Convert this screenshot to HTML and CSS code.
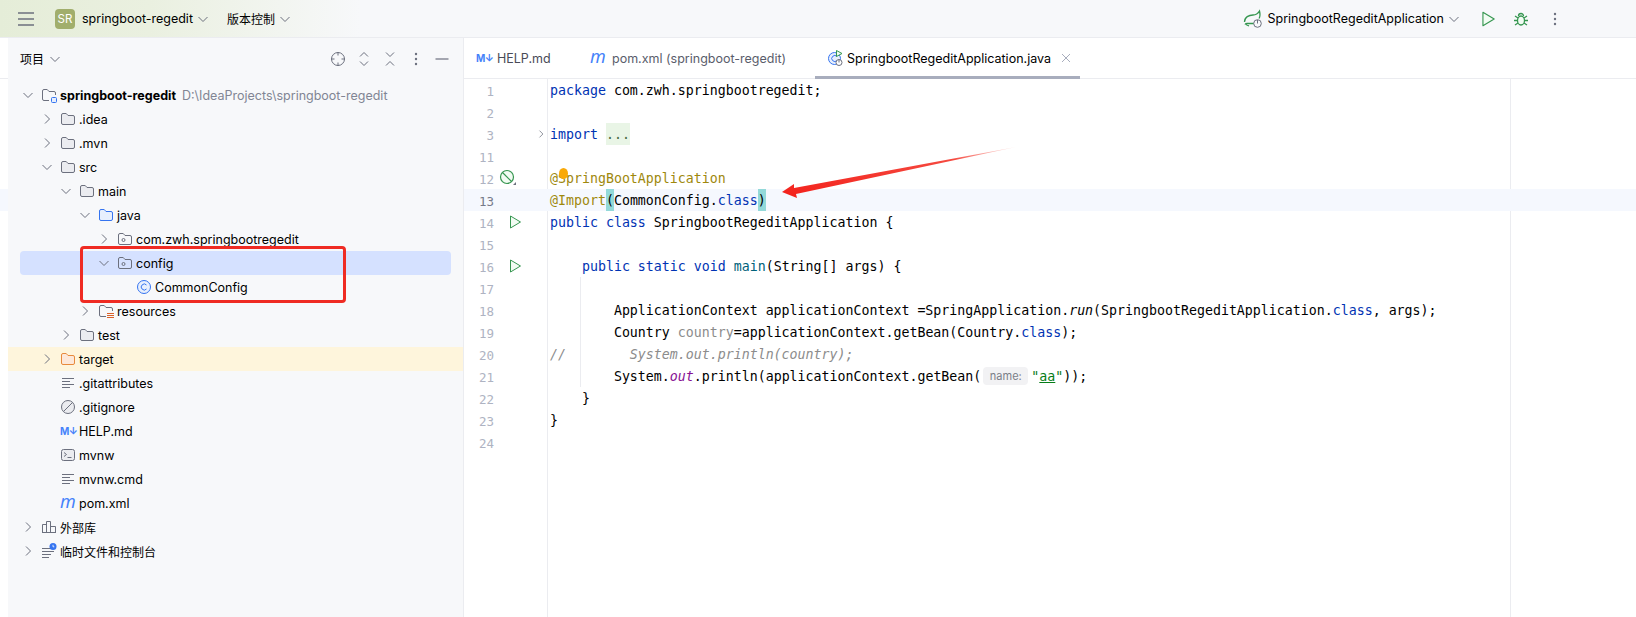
FILE: index.html
```html
<!DOCTYPE html>
<html lang="zh-CN">
<head>
    <meta charset="UTF-8">
    <title>springboot-regedit</title>
    <link rel="stylesheet" href="styles.css">
</head>
<body>
    <svg class="defs" width="0" height="0">
        <symbol id="i-down" viewBox="0 0 16 16"><path d="M3.500 6 8 10.500 12.500 6" fill="none" stroke="#6c707e"/></symbol>
        <symbol id="i-right" viewBox="0 0 16 16"><path d="M6 3.500 10.500 8 6 12.500" fill="none" stroke="#6c707e"/></symbol>
        <symbol id="i-folder" viewBox="0 0 16 16"><path d="M1.500 4A1.500 1.500 0 0 1 3 2.500h3.200l1.800 2h5A1.500 1.500 0 0 1 14.500 6v6a1.500 1.500 0 0 1-1.500 1.500H3A1.500 1.500 0 0 1 1.500 12z" fill="#ebecf0" stroke="#6c707e"/></symbol>
        <symbol id="i-folder-blue" viewBox="0 0 16 16"><path d="M1.500 4A1.500 1.500 0 0 1 3 2.500h3.200l1.800 2h5A1.500 1.500 0 0 1 14.500 6v6a1.500 1.500 0 0 1-1.500 1.500H3A1.500 1.500 0 0 1 1.500 12z" fill="#e7effd" stroke="#3574f0"/></symbol>
        <symbol id="i-folder-orange" viewBox="0 0 16 16"><path d="M1.500 4A1.500 1.500 0 0 1 3 2.500h3.200l1.800 2h5A1.500 1.500 0 0 1 14.500 6v6a1.500 1.500 0 0 1-1.500 1.500H3A1.500 1.500 0 0 1 1.500 12z" fill="#fde8d9" stroke="#e88a3c"/></symbol>
        <symbol id="i-package" viewBox="0 0 16 16"><path d="M1.500 4A1.500 1.500 0 0 1 3 2.500h3.200l1.800 2h5A1.500 1.500 0 0 1 14.500 6v6a1.500 1.500 0 0 1-1.500 1.500H3A1.500 1.500 0 0 1 1.500 12z" fill="none" stroke="#6c707e"/><circle cx="6.500" cy="9" r="1.500" fill="none" stroke="#6c707e"/></symbol>
        <symbol id="i-module" viewBox="0 0 16 16"><path d="M8 13.500H3A1.500 1.500 0 0 1 1.500 12V4A1.500 1.500 0 0 1 3 2.500h3.200l1.800 2h5A1.500 1.500 0 0 1 14.500 6v2" fill="none" stroke="#6c707e"/><rect x="10.500" y="10.500" width="5" height="5" rx="1" fill="#e7effd" stroke="#3574f0"/></symbol>
        <symbol id="i-resources" viewBox="0 0 16 16"><path d="M8 13.500H3A1.500 1.500 0 0 1 1.500 12V4A1.500 1.500 0 0 1 3 2.500h3.200l1.800 2h5A1.500 1.500 0 0 1 14.500 6v2" fill="none" stroke="#6c707e"/><path d="M9 10.500h7M9 12.500h7M9 14.500h7" stroke="#d9622b"/></symbol>
        <symbol id="i-class" viewBox="0 0 16 16"><circle cx="8" cy="8" r="6.500" fill="#e7effd" stroke="#3574f0"/><path d="M10.500 6A3 3 0 1 0 10.500 10" fill="none" stroke="#3574f0"/></symbol>
        <symbol id="i-text" viewBox="0 0 16 16"><path d="M2 3.500h12M2 6.500h8M2 9.500h12M2 12.500h8" stroke="#6c707e"/></symbol>
        <symbol id="i-ignore" viewBox="0 0 16 16"><circle cx="8" cy="8" r="6.500" fill="#ebecf0" stroke="#6c707e"/><path d="M3.500 12.500 12.500 3.500" stroke="#6c707e"/></symbol>
        <symbol id="i-shell" viewBox="0 0 16 16"><rect x="1.500" y="2.500" width="13" height="11" rx="2" fill="#ebecf0" stroke="#6c707e"/><path d="M4 5.500 6.500 7.500 4 9.500M7.500 10.500h4" fill="none" stroke="#6c707e"/></symbol>
        <symbol id="i-library" viewBox="0 0 16 16"><path d="M1.500 13.500v-8h4v8zM5.500 13.500v-11h4v11zM9.500 13.500v-6h5v6zM1 13.500h14" fill="none" stroke="#6c707e"/></symbol>
        <symbol id="i-scratch" viewBox="0 0 16 16"><path d="M1 5.500h9M1 8.500h12M1 11.500h9M1 14.500h7" stroke="#6c707e"/><circle cx="12" cy="3.500" r="3.500" fill="#3574f0"/><path d="M12 1.800V3.800h1.300" fill="none" stroke="#fff" stroke-width=".8"/></symbol>
        <symbol id="i-run" viewBox="0 0 16 16"><path d="M3.500 2 13.500 8 3.500 14z" fill="#f2fcf3" stroke="#369650" stroke-linejoin="round"/></symbol>
        <symbol id="i-kebab" viewBox="0 0 16 16"><circle cx="8" cy="3" r="1.200" fill="#6c707e"/><circle cx="8" cy="8" r="1.200" fill="#6c707e"/><circle cx="8" cy="13" r="1.200" fill="#6c707e"/></symbol>
    </svg>

    <header class="titlebar">
        <div class="title-left">
            <svg class="hamburger" width="16" height="14" viewBox="0 0 16 14"><path d="M0 1h16M0 7h16M0 13h16" stroke="#6c707e" stroke-width="1.500"/></svg>
            <span class="project-badge">SR</span>
            <span class="title-item">springboot-regedit</span>
            <svg class="ico title-chev"><use href="#i-down"/></svg>
            <span class="title-item vcs">版本控制</span>
            <svg class="ico title-chev"><use href="#i-down"/></svg>
        </div>
        <div class="title-right">
            <svg class="run-config" width="20" height="20" viewBox="0 0 20 20">
                <path d="M1.500 13C1.500 8 6 6 10 6c3 0 5-1.500 6.500-4 1 4 .5 6-.5 7.500M12 14.500H5.500C4 14.500 3 14 2 15.500M6 17 3 15.500" fill="none" stroke="#369650" stroke-width="1.300"/>
                <circle cx="14.500" cy="14.500" r="3.800" fill="#f7f8fa" stroke="#6c707e"/>
                <path d="M14.500 11v3.500" stroke="#6c707e"/>
            </svg>
            <span class="title-item">SpringbootRegeditApplication</span>
            <svg class="ico config-chev"><use href="#i-down"/></svg>
            <svg class="run-btn" width="18" height="18"><use href="#i-run"/></svg>
            <svg class="bug-btn" width="16" height="16" viewBox="0 0 16 16">
                <ellipse cx="8" cy="9.500" rx="3.500" ry="4.500" fill="#f2fcf3" stroke="#369650" stroke-width="1.300"/>
                <path d="M5.500 5a2.500 2.500 0 0 1 5 0M4.500 9.500H1M15 9.500h-3.500M2 5l3 2M14 5l-3 2M2 14l3-2M14 14l-3-2" fill="none" stroke="#369650" stroke-width="1.300"/>
            </svg>
            <svg class="ico kebab-btn"><use href="#i-kebab"/></svg>
        </div>
    </header>

    <main class="workspace">
        <div class="edge"></div>

        <aside class="project-panel">
            <div class="panel-head">
                <span class="panel-title">项目</span>
                <svg class="ico panel-chev"><use href="#i-down"/></svg>
                <div class="panel-tools">
                    <svg class="ico" viewBox="0 0 16 16"><circle cx="8" cy="8" r="6.500" fill="none" stroke="#6c707e"/><path d="M8 1v3.500M8 11.500V15M1 8h3.500M11.500 8H15" stroke="#6c707e"/></svg>
                    <svg class="ico" viewBox="0 0 16 16"><path d="M4 5.500 8 1.500l4 4M4 10.500l4 4 4-4" fill="none" stroke="#6c707e"/></svg>
                    <svg class="ico" viewBox="0 0 16 16"><path d="M4 1.500l4 4 4-4M4 14.500l4-4 4 4" fill="none" stroke="#6c707e"/></svg>
                    <svg class="ico"><use href="#i-kebab"/></svg>
                    <svg class="ico" viewBox="0 0 16 16"><path d="M1.500 8h13" stroke="#6c707e" stroke-width="1.200"/></svg>
                </div>
            </div>

            <div class="tree">
                <div class="row lv0"><svg class="chev"><use href="#i-down"/></svg><svg class="ico"><use href="#i-module"/></svg><b>springboot-regedit</b><span class="path">D:\IdeaProjects\springboot-regedit</span></div>
                <div class="row lv1"><svg class="chev"><use href="#i-right"/></svg><svg class="ico"><use href="#i-folder"/></svg>.idea</div>
                <div class="row lv1"><svg class="chev"><use href="#i-right"/></svg><svg class="ico"><use href="#i-folder"/></svg>.mvn</div>
                <div class="row lv1"><svg class="chev"><use href="#i-down"/></svg><svg class="ico"><use href="#i-folder"/></svg>src</div>
                <div class="row lv2"><svg class="chev"><use href="#i-down"/></svg><svg class="ico"><use href="#i-folder"/></svg>main</div>
                <div class="row lv3"><svg class="chev"><use href="#i-down"/></svg><svg class="ico"><use href="#i-folder-blue"/></svg>java</div>
                <div class="row lv4"><svg class="chev"><use href="#i-right"/></svg><svg class="ico"><use href="#i-package"/></svg>com.zwh.springbootregedit</div>
                <div class="row selected"><svg class="chev"><use href="#i-down"/></svg><svg class="ico"><use href="#i-package"/></svg>config</div>
                <div class="row lv5"><span class="chev"></span><svg class="ico"><use href="#i-class"/></svg>CommonConfig</div>
                <div class="row lv3"><svg class="chev"><use href="#i-right"/></svg><svg class="ico"><use href="#i-resources"/></svg>resources</div>
                <div class="row lv2"><svg class="chev"><use href="#i-right"/></svg><svg class="ico"><use href="#i-folder"/></svg>test</div>
                <div class="row lv1 excluded"><svg class="chev"><use href="#i-right"/></svg><svg class="ico"><use href="#i-folder-orange"/></svg>target</div>
                <div class="row lv1"><span class="chev"></span><svg class="ico"><use href="#i-text"/></svg>.gitattributes</div>
                <div class="row lv1"><span class="chev"></span><svg class="ico"><use href="#i-ignore"/></svg>.gitignore</div>
                <div class="row lv1"><span class="chev"></span><span class="md-icon">M↓</span>HELP.md</div>
                <div class="row lv1"><span class="chev"></span><svg class="ico"><use href="#i-shell"/></svg>mvnw</div>
                <div class="row lv1"><span class="chev"></span><svg class="ico"><use href="#i-text"/></svg>mvnw.cmd</div>
                <div class="row lv1"><span class="chev"></span><span class="m-icon">m</span>pom.xml</div>
                <div class="row lv0 cjk"><svg class="chev"><use href="#i-right"/></svg><svg class="ico"><use href="#i-library"/></svg>外部库</div>
                <div class="row lv0 cjk"><svg class="chev"><use href="#i-right"/></svg><svg class="ico"><use href="#i-scratch"/></svg>临时文件和控制台</div>
            </div>
        </aside>

        <section class="editor">
            <div class="tabs">
                <div class="tab tab-help"><span class="md-icon">M↓</span>HELP.md</div>
                <div class="tab tab-pom"><span class="m-icon">m</span>pom.xml (springboot-regedit)</div>
                <div class="tab active">
                    <svg class="ico" viewBox="0 0 16 16">
                        <circle cx="7.500" cy="8.500" r="6" fill="#e7effd" stroke="#3574f0"/>
                        <path d="M10 6.500A3 3 0 1 0 10 10.500" fill="none" stroke="#3574f0"/>
                        <path d="M9.500 0.500 15 3.500 9.500 6.500z" fill="#f2fcf3" stroke="#369650"/>
                        <circle cx="12" cy="12.500" r="3" fill="#fff" stroke="#6c707e"/>
                        <path d="M12 9.500v3" stroke="#6c707e"/>
                    </svg>
                    SpringbootRegeditApplication.java
                    <svg class="tab-close" width="10" height="10" viewBox="0 0 10 10"><path d="M1 1l8 8M9 1 1 9" stroke="#a8adbd"/></svg>
                </div>
            </div>

            <div class="code">
                <div class="line"><span class="num">1</span><span class="mark"></span><span class="src"><i class="kw">package</i> com.zwh.springbootregedit;</span></div>
                <div class="line"><span class="num">2</span><span class="mark"></span><span class="src"></span></div>
                <div class="line"><span class="num">3</span><span class="mark"><svg class="fold" width="12" height="12"><use href="#i-right"/></svg></span><span class="src"><i class="kw">import</i> <span class="folded">...</span></span></div>
                <div class="line"><span class="num">11</span><span class="mark"></span><span class="src"></span></div>
                <div class="line"><span class="num">12</span><span class="mark"><svg class="leaf-off" width="18" height="18" viewBox="0 0 18 18"><circle cx="8" cy="8" r="6.500" fill="#f2fcf3" stroke="#369650" stroke-width="1.200"/><path d="M3.500 3.500 12.500 12.500" stroke="#369650" stroke-width="1.200"/><path d="M14 16h3v-3z" fill="#6c707e"/></svg></span><span class="src"><i class="ann">@SpringBootApplication</i></span></div>
                <div class="line current"><span class="num">13</span><span class="mark"></span><span class="src"><i class="ann">@Import</i><span class="brace">(</span>CommonConfig.<i class="kw">class</i><span class="brace">)</span></span></div>
                <div class="line"><span class="num">14</span><span class="mark"><svg class="gutter-run" width="16" height="16"><use href="#i-run"/></svg></span><span class="src"><i class="kw">public class</i> SpringbootRegeditApplication {</span></div>
                <div class="line"><span class="num">15</span><span class="mark"></span><span class="src"></span></div>
                <div class="line"><span class="num">16</span><span class="mark"><svg class="gutter-run" width="16" height="16"><use href="#i-run"/></svg></span><span class="src">    <i class="kw">public static void</i> <i class="fn">main</i>(String[] args) {</span></div>
                <div class="line"><span class="num">17</span><span class="mark"></span><span class="src"></span></div>
                <div class="line"><span class="num">18</span><span class="mark"></span><span class="src">        ApplicationContext applicationContext =SpringApplication.<em>run</em>(SpringbootRegeditApplication.<i class="kw">class</i>, args);</span></div>
                <div class="line"><span class="num">19</span><span class="mark"></span><span class="src">        Country <i class="unused">country</i>=applicationContext.getBean(Country.<i class="kw">class</i>);</span></div>
                <div class="line"><span class="num">20</span><span class="mark"></span><span class="src"><em class="comment">//        System.out.println(country);</em></span></div>
                <div class="line"><span class="num">21</span><span class="mark"></span><span class="src">        System.<em class="field">out</em>.println(applicationContext.getBean(<span class="hint">name:</span><i class="str">"<u>aa</u>"</i>));</span></div>
                <div class="line"><span class="num">22</span><span class="mark"></span><span class="src">    }</span></div>
                <div class="line"><span class="num">23</span><span class="mark"></span><span class="src">}</span></div>
                <div class="line"><span class="num">24</span><span class="mark"></span><span class="src"></span></div>
            </div>
        </section>
    </main>

    <!-- annotations drawn on top of the screenshot -->
    <div class="red-box"></div>
    <div class="dot"></div>
    <svg class="arrow" width="240" height="56" viewBox="0 0 240 56">
        <defs>
            <linearGradient id="fade" x1="0" y1="1" x2="1" y2="0">
                <stop offset="0" stop-color="#f3201a"/>
                <stop offset=".75" stop-color="#f54a40"/>
                <stop offset="1" stop-color="#f8a09a" stop-opacity=".3"/>
            </linearGradient>
        </defs>
        <polygon points="2,46 14,38 14,42 236,1 16,48 17,52" fill="url(#fade)"/>
    </svg>
</body>
</html>
```

FILE: styles.css
```css
* {
    box-sizing: border-box;
}
html, body {
    height: 100%;
}
body {
    margin: 0;
    overflow: hidden;
    background-color: white;
    color: #000;
    font-family: Inter, "Noto Sans CJK SC", sans-serif;
    font-size: 12.500px;
}
.defs {
    position: absolute;
}
.ico {
    width: 16px;
    height: 16px;
    flex: none;
}

/* title bar */
.titlebar {
    display: flex;
    justify-content: space-between;
    align-items: center;
    height: 38px;
    padding-left: 18px;
    background: linear-gradient(90deg, #e5edd8 0, #eaf0e0 150px, #f7f8fa 360px);
    border-bottom: 1px solid #ebecf0;
}
.title-left, .title-right {
    display: flex;
    align-items: center;
}
.hamburger {
    margin-right: 21px;
}
.project-badge {
    width: 20px;
    height: 20px;
    margin-right: 7px;
    border-radius: 4px;
    background-color: #a1ae6c;
    color: white;
    font-size: 11.500px;
    line-height: 20px;
    text-align: center;
}
.title-chev {
    margin-left: 2px;
}
.vcs {
    margin-left: 16px;
    font-size: 12px;
}
.title-right {
    padding-right: 73px;
}
.run-config {
    margin-right: 4px;
}
.config-chev {
    margin-left: 2px;
}
.run-btn {
    margin-left: 17px;
}
.bug-btn {
    margin-left: 16px;
}
.kebab-btn {
    margin-left: 18px;
}

/* main area */
.workspace {
    display: flex;
    height: calc(100% - 38px);
}
.edge {
    width: 8px;
    flex: none;
    background: linear-gradient(#fff 40px, #ebecf0 40px, #ebecf0 41px, #fff 41px, #fff 151px, #f5f8fe 151px, #f5f8fe 173px, #fff 173px);
}
.project-panel {
    width: 456px;
    flex: none;
    background-color: #f7f8fa;
    border-right: 1px solid #ebecf0;
}
.panel-head {
    display: flex;
    align-items: center;
    height: 41px;
    padding: 0 13px 0 12px;
}
.panel-title {
    font-size: 12px;
}
.panel-chev {
    margin-left: 3px;
}
.panel-tools {
    display: flex;
    gap: 10px;
    margin-left: auto;
}

/* tree */
.tree {
    padding-top: 4px;
}
.row {
    display: flex;
    align-items: center;
    height: 24px;
    white-space: nowrap;
}
.row .ico, .row .md-icon, .row .m-icon {
    margin-left: 2px;
    margin-right: 3px;
}
.chev {
    width: 16px;
    height: 16px;
    margin-right: 3px;
    flex: none;
}
.lv0 { padding-left: 12px; }
.lv1 { padding-left: 31px; }
.lv2 { padding-left: 50px; }
.lv3 { padding-left: 69px; }
.lv4 { padding-left: 88px; }
.lv5 { padding-left: 107px; }
.cjk {
    font-size: 12px;
}
.row b {
    font-weight: 700;
}
.path {
    margin-left: 6px;
    color: #818594;
}
.selected {
    margin: 0 12px;
    padding-left: 76px;
    border-radius: 4px;
    background-color: #d5e1ff;
}
.excluded {
    background-color: #fef5dc;
}
.md-icon {
    width: 16px;
    flex: none;
    color: #4682fa;
    font-size: 10px;
    font-weight: 700;
    letter-spacing: -0.500px;
    white-space: nowrap;
}
.m-icon {
    width: 16px;
    flex: none;
    color: #4682fa;
    font-family: "Noto Sans", sans-serif;
    font-size: 18px;
    font-style: italic;
    line-height: 16px;
    margin-top: -4px;
}

/* editor */
.editor {
    flex: 1;
    min-width: 0;
    background-color: white;
}
.tabs {
    display: flex;
    height: 41px;
    border-bottom: 1px solid #ebecf0;
}
.tab {
    display: flex;
    align-items: center;
    white-space: nowrap;
    color: #5a5d6b;
}
.tab .md-icon {
    margin-right: 5px;
}
.tab .m-icon {
    margin-right: 6px;
}
.tab-help {
    padding-left: 12px;
    color: #494b57;
    width: 126px;
}
.tab-pom {
    width: 225px;
}
.active {
    position: relative;
    gap: 4px;
    width: 265px;
    padding-left: 12px;
    color: #000;
}
.active::after {
    content: "";
    position: absolute;
    left: 0;
    right: 0;
    bottom: -1px;
    height: 3px;
    background-color: #a8adbd;
}
.tab-close {
    margin-left: 6px;
}
.code {
    height: calc(100% - 41px);
    font-family: "DejaVu Sans Mono", monospace;
    font-size: 13.280px;
    background:
        linear-gradient(#ebecf0, #ebecf0) 83px 0 / 1px 100% no-repeat,
        linear-gradient(#ebecf0, #ebecf0) 1046px 0 / 1px 100% no-repeat,
        linear-gradient(#ebecf0, #ebecf0) 116px 198px / 1px 110px no-repeat;
}
.line {
    display: flex;
    align-items: center;
    height: 22px;
}
.current {
    background-color: #f5f8fe;
}
.num {
    width: 30px;
    flex: none;
    padding-top: 2px;
    color: #aeb3c2;
    font-size: 12.500px;
    text-align: right;
}
.current .num {
    color: #767a8a;
}
.mark {
    display: flex;
    align-items: center;
    width: 56px;
    height: 22px;
    flex: none;
}
.fold {
    margin-left: 41px;
}
.leaf-off {
    margin-left: 5px;
}
.gutter-run {
    margin-left: 13px;
}
.src {
    white-space: pre;
    line-height: 24px;
    height: 22px;
}
.src i, .src em {
    font-style: normal;
}
.src em {
    font-style: italic;
}
.kw { color: #0033b3; }
.ann { color: #9e880d; }
.fn { color: #00627a; }
.str { color: #067d17; }
.unused { color: #8c8c8c; }
.field { color: #871094; }
.comment { color: #8c8c8c; }
.folded {
    display: inline-block;
    height: 22px;
    background-color: #e9f5e6;
    vertical-align: top;
    color: #4b6b45;
}
.brace {
    display: inline-block;
    height: 22px;
    background-color: #93d9d9;
    vertical-align: top;
}
.hint {
    display: inline-block;
    width: 45px;
    height: 18px;
    margin: 2px 3px 0 2px;
    border-radius: 4px;
    background-color: #f2f2f4;
    color: #7a7e88;
    font-family: Inter, sans-serif;
    font-size: 11px;
    line-height: 18px;
    text-align: center;
    vertical-align: top;
}

/* annotations */
.red-box {
    position: absolute;
    left: 80px;
    top: 246px;
    width: 266px;
    height: 57px;
    border: 3px solid #ef2b23;
    border-radius: 4px;
}
.dot {
    position: absolute;
    left: 559px;
    top: 168px;
    width: 9px;
    height: 11px;
    border-radius: 50%;
    background-color: #f9a908;
}
.arrow {
    position: absolute;
    left: 780px;
    top: 146px;
}
```
